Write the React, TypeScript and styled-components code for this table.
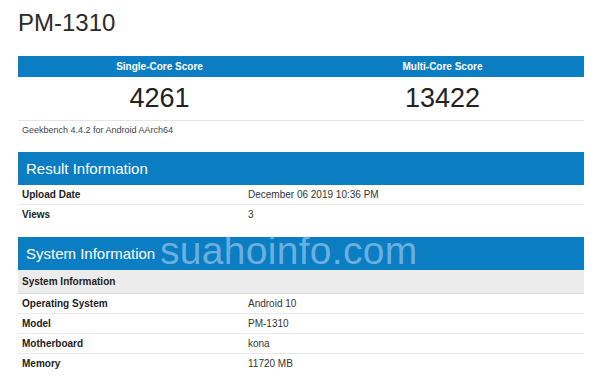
import styled, { createGlobalStyle } from "styled-components";

const Global = createGlobalStyle`
  *, *::before, *::after { box-sizing: border-box; }
  body {
    margin: 0;
    background: #fff;
    font-family: "Liberation Sans", Arial, sans-serif;
    color: #222;
  }
`;

const Page = styled.div`
  position: relative;
  width: 600px;
  height: 382px;
  overflow: hidden;
  padding: 8px 16px 0 18px;
`;

const Title = styled.h1`
  margin: 0;
  font-size: 24px;
  font-weight: 400;
  line-height: 30px;
  color: #2a2a2a;
`;

const ScoreTable = styled.div`
  margin-top: 18px;
  display: grid;
  grid-template-columns: 1fr 1fr;
  border-bottom: 1px solid #e6e6e6;
`;

const ScoreHead = styled.div`
  background: #0b7dc2;
  color: #fff;
  font-size: 10px;
  font-weight: 700;
  text-align: center;
  height: 21px;
  line-height: 21px;
`;

const ScoreValue = styled.div`
  font-size: 27px;
  text-align: center;
  height: 43px;
  line-height: 43px;
  color: #222;
`;

const Note = styled.div`
  font-size: 9px;
  color: #444;
  padding: 4px 0 0 4px;
  height: 20px;
`;

const Section = styled.div<{ $gap: number }>`
  margin-top: ${(p) => p.$gap}px;
`;

const SectionHead = styled.div`
  background: #0b7dc2;
  color: #fff;
  font-size: 15px;
  height: 33px;
  line-height: 33px;
  padding-left: 8px;
`;

const SubHead = styled.div`
  background: #ececec;
  font-size: 10px;
  font-weight: 700;
  height: 24px;
  line-height: 23px;
  padding-left: 4px;
  border-bottom: 1px solid #dcdcdc;
`;

const Row = styled.div<{ $last?: boolean }>`
  display: grid;
  grid-template-columns: 230px 1fr;
  height: 20px;
  line-height: 19px;
  font-size: 10px;
  border-bottom: 1px solid ${(p) => (p.$last ? "transparent" : "#e8e8e8")};
`;

const Key = styled.div`
  font-weight: 700;
  padding-left: 4px;
`;

const Val = styled.div`
  color: #333;
`;

const Watermark = styled.div`
  position: absolute;
  left: 160px;
  top: 229px;
  font-size: 39px;
  color: rgba(190, 220, 245, 0.55);
  letter-spacing: 0.3px;
  pointer-events: none;
`;

const result = [
  ["Upload Date", "December 06 2019 10:36 PM"],
  ["Views", "3"],
];

const system = [
  ["Operating System", "Android 10"],
  ["Model", "PM-1310"],
  ["Motherboard", "kona"],
  ["Memory", "11720 MB"],
];

export default function App() {
  return (
    <Page>
      <Global />
      <Title>PM-1310</Title>
      <ScoreTable>
        <ScoreHead>Single-Core Score</ScoreHead>
        <ScoreHead>Multi-Core Score</ScoreHead>
        <ScoreValue>4261</ScoreValue>
        <ScoreValue>13422</ScoreValue>
      </ScoreTable>
      <Note>Geekbench 4.4.2 for Android AArch64</Note>
      <Section $gap={11}>
        <SectionHead>Result Information</SectionHead>
        {result.map(([k, v], i) => (
          <Row key={k} $last={i === result.length - 1}>
            <Key>{k}</Key>
            <Val>{v}</Val>
          </Row>
        ))}
      </Section>
      <Section $gap={12}>
        <SectionHead>System Information</SectionHead>
        <SubHead>System Information</SubHead>
        {system.map(([k, v], i) => (
          <Row key={k} $last={i === system.length - 1}>
            <Key>{k}</Key>
            <Val>{v}</Val>
          </Row>
        ))}
      </Section>
      <Watermark>suahoinfo.com</Watermark>
    </Page>
  );
}
